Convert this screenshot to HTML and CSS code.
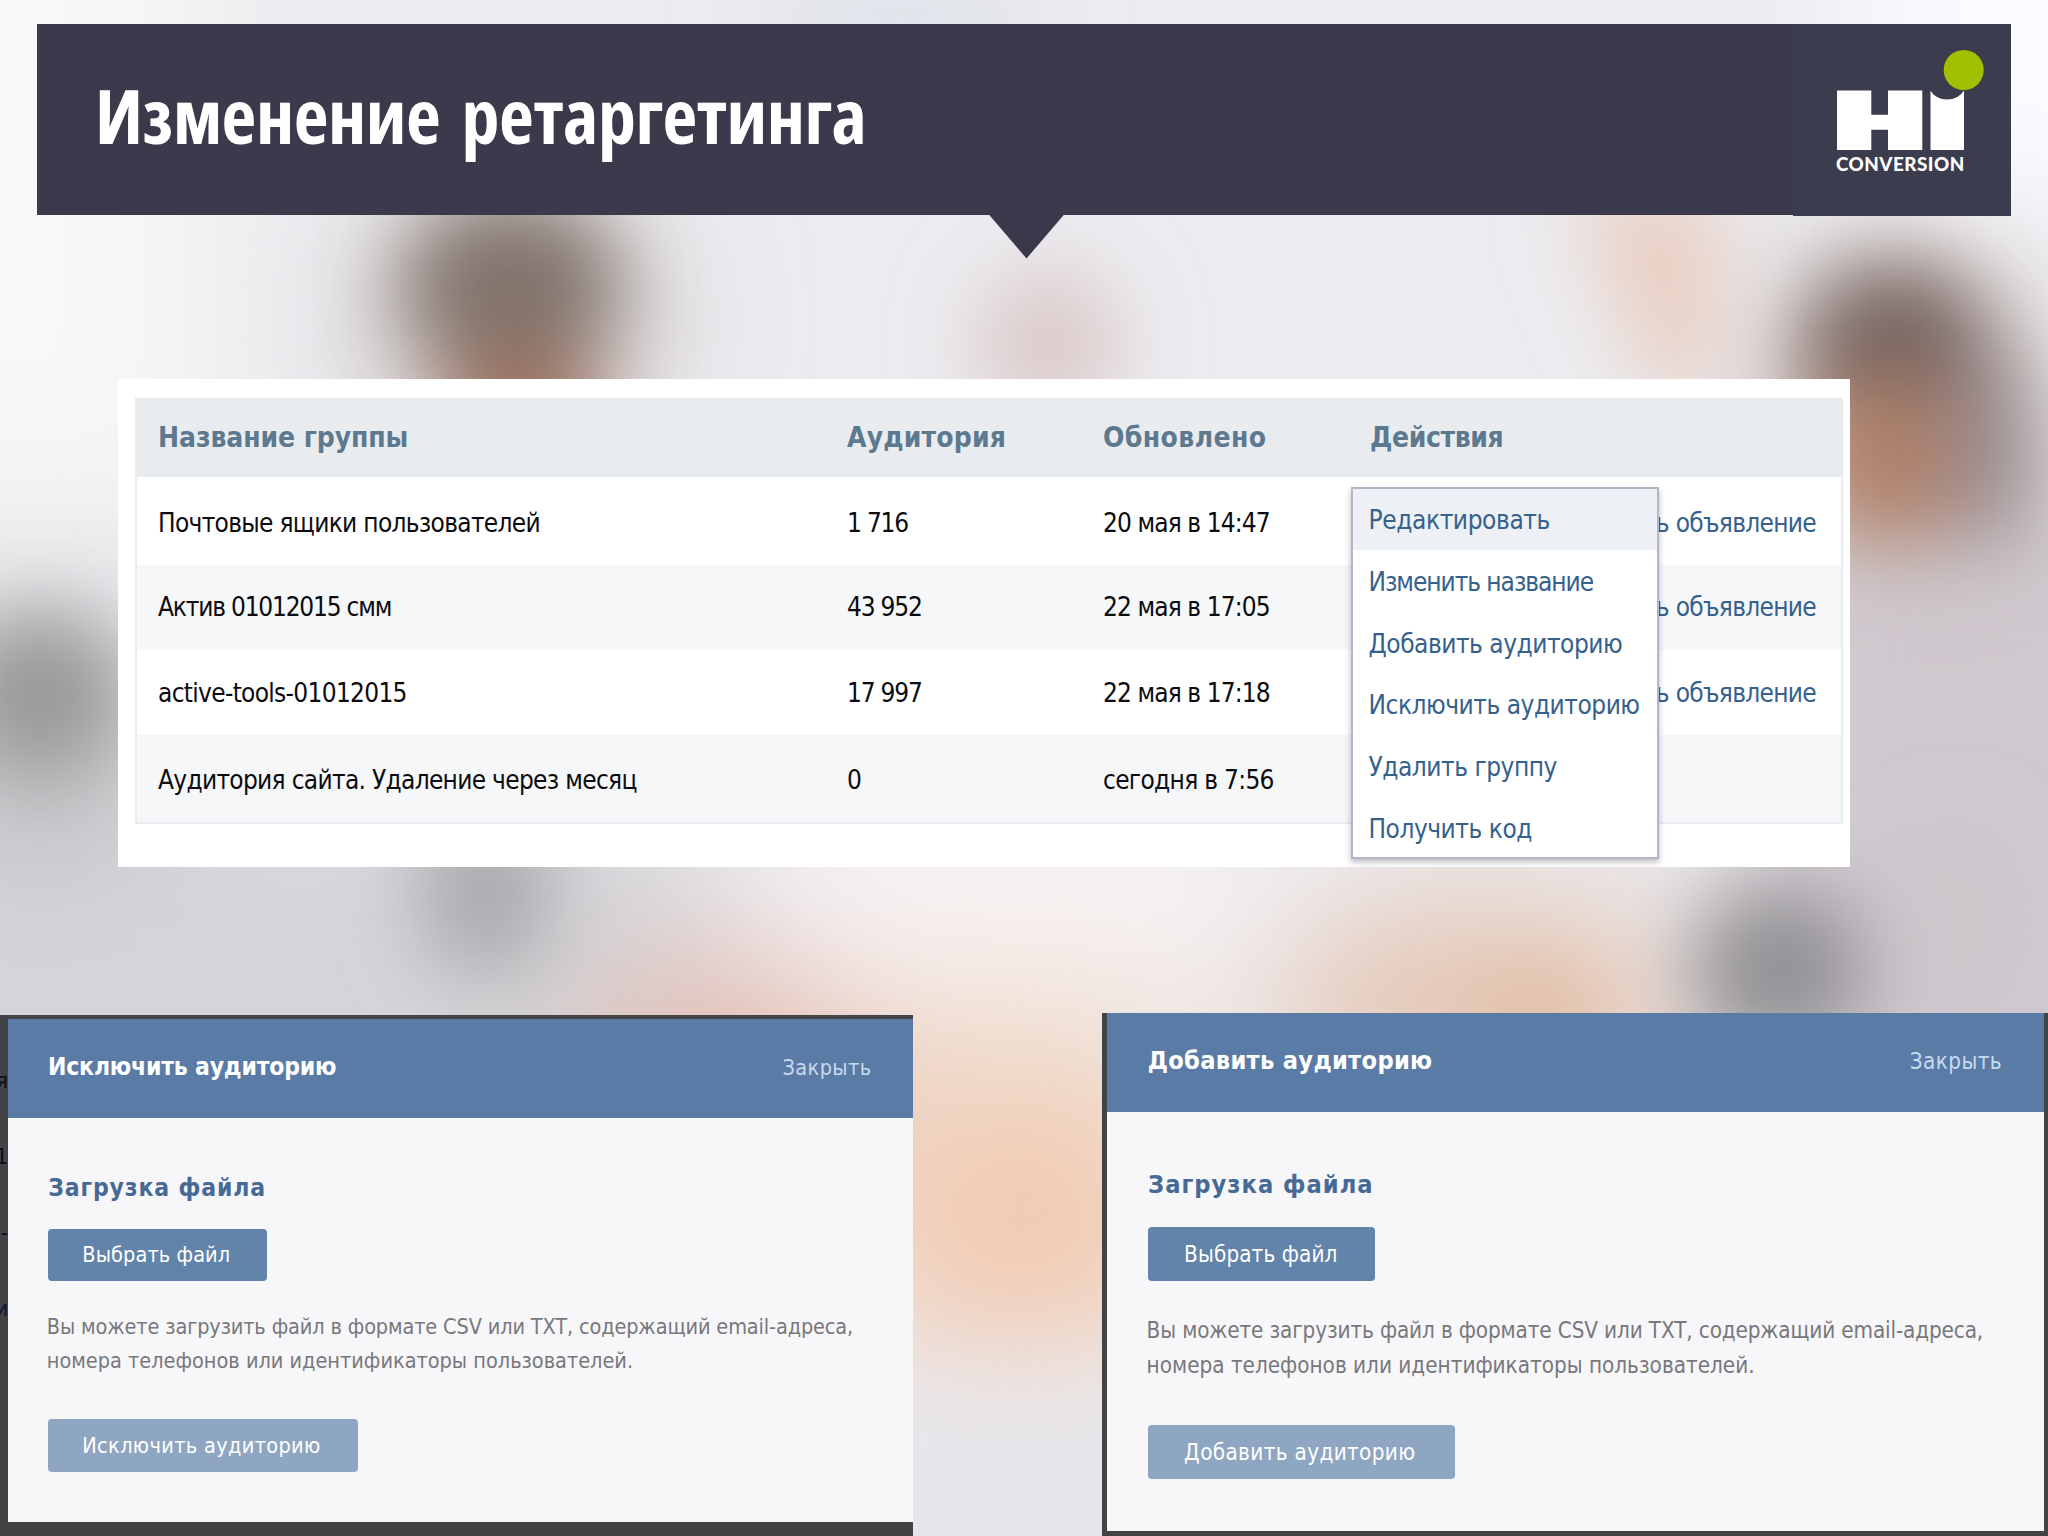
FILE: index.html
```html
<!DOCTYPE html>
<html lang="ru">
<head>
<meta charset="utf-8">
<title>Изменение ретаргетинга</title>
<link rel="stylesheet" href="styles.css">
</head>
<body>
<!-- Out-of-focus office photo behind the slide -->
<svg class="backdrop" viewBox="0 0 2048 1536" preserveAspectRatio="none" aria-hidden="true">
  <defs>
    <filter id="soft" x="-100%" y="-100%" width="300%" height="300%"><feGaussianBlur stdDeviation="40"/></filter>
    <filter id="wide" x="-100%" y="-100%" width="300%" height="300%"><feGaussianBlur stdDeviation="70"/></filter>
  </defs>
  <rect width="2048" height="1536" fill="#ececf0"/>
  <g filter="url(#wide)">
    <rect x="-200" y="-200" width="400" height="700" fill="#f8f8f8"/>
    <rect x="-200" y="780" width="900" height="500" fill="#d4d5d9"/>
    <rect x="1750" y="480" width="500" height="700" fill="#cfc8ce"/>
    <rect x="1850" y="-200" width="400" height="420" fill="#fafbff"/>
    <ellipse cx="510" cy="320" rx="150" ry="120" fill="#c8c0be"/>
    <ellipse cx="1900" cy="390" rx="130" ry="150" fill="#c3b3ae"/>
    <ellipse cx="40" cy="740" rx="130" ry="130" fill="#c2c2c5"/>
    <ellipse cx="1020" cy="900" rx="260" ry="100" fill="#f8f3f4"/>
    <ellipse cx="720" cy="1060" rx="150" ry="110" fill="#e3bdb2"/>
    <ellipse cx="1480" cy="1010" rx="220" ry="110" fill="#e4c6b4"/>
    <rect x="870" y="1110" width="300" height="230" fill="#f2c9ae"/>
    <rect x="860" y="980" width="300" height="120" fill="#efdccb"/>
    <rect x="800" y="1440" width="420" height="240" fill="#e2e4ea"/>
  </g>
  <g filter="url(#soft)">
    <ellipse cx="900" cy="15" rx="150" ry="35" fill="#dbe0e7"/>
    <ellipse cx="510" cy="285" rx="108" ry="88" fill="#81736c"/>
    <ellipse cx="520" cy="400" rx="85" ry="50" fill="#9d725e"/>
    <ellipse cx="1048" cy="345" rx="74" ry="80" fill="#dccbca"/>
    <path d="M1570 190h150v160q-20 60-70 40z" fill="#e9cfc2"/>
    <ellipse cx="1895" cy="350" rx="92" ry="84" fill="#75645e"/>
    <ellipse cx="1890" cy="462" rx="80" ry="80" fill="#b18269"/>
    <ellipse cx="1990" cy="450" rx="40" ry="100" fill="#948a8d"/>
    <ellipse cx="40" cy="695" rx="82" ry="80" fill="#979698"/>
    <ellipse cx="485" cy="890" rx="68" ry="90" fill="#aaaaae"/>
    <ellipse cx="1780" cy="970" rx="88" ry="85" fill="#939194"/>
    <ellipse cx="1535" cy="1030" rx="55" ry="60" fill="#e2bfa5"/>
    <ellipse cx="1955" cy="920" rx="40" ry="90" fill="#cdc6cb"/>
  </g>
</svg>

<div class="slide">
  <header class="banner">
    <h1 class="banner-title">Изменение ретаргетинга</h1>
    <div class="brand">
      <svg class="brand-mark" viewBox="0 0 147 100" width="147" height="100" aria-hidden="true">
        <path fill="#fff" d="M0 40.500h34.300v24.300h16.700v-24.300h34.300v59.500h-34.300v-20.300h-16.700v20.300h-34.300z"/>
        <path fill="#fff" d="M93.500 40.800Q99 49.500 110 49.500Q121.500 49.500 127 40.500V100H93.500z"/>
        <circle fill="#a2c000" cx="126.700" cy="20" r="20"/>
      </svg>
      <div class="brand-name">CONVERSION</div>
    </div>
  </header>

  <section class="panel">
    <div class="table">
      <div class="row row-head">
        <div>Название группы</div><div class="ls-b">Аудитория</div><div class="ls-c">Обновлено</div><div class="ls-d">Действия</div>
      </div>
      <div class="row row-1">
        <div>Почтовые ящики пользователей</div><div class="num">1 716</div><div class="date">20 мая в 14:47</div><div class="ad"><a>ь объявление</a></div>
      </div>
      <div class="row row-2 alt">
        <div class="num">Актив 01012015 смм</div><div class="num">43 952</div><div class="date">22 мая в 17:05</div><div class="ad"><a>ь объявление</a></div>
      </div>
      <div class="row row-3">
        <div>active-tools-01012015</div><div class="num">17 997</div><div class="date">22 мая в 17:18</div><div class="ad"><a>ь объявление</a></div>
      </div>
      <div class="row row-4 alt">
        <div>Аудитория сайта. Удаление через месяц</div><div>0</div><div>сегодня в 7:56</div><div></div>
      </div>
    </div>
    <ul class="menu">
      <li class="active">Редактировать</li>
      <li class="tight">Изменить название</li>
      <li>Добавить аудиторию</li>
      <li>Исключить аудиторию</li>
      <li>Удалить группу</li>
      <li>Получить код</li>
    </ul>
  </section>

  <div class="dialogs">
    <section class="dialog dialog-exclude">
      <div class="behind" aria-hidden="true"><span>я</span><span>1</span><span>s-</span><span class="link">и</span></div>
      <div class="dialog-head"><h2>Исключить аудиторию</h2><a>Закрыть</a></div>
      <div class="dialog-body">
        <h3>Загрузка файла</h3>
        <button class="btn">Выбрать файл</button>
        <p>Вы можете загрузить файл в формате CSV или TXT, содержащий email-адреса,<br><span class="loose">номера телефонов или идентификаторы пользователей.</span></p>
        <button class="btn btn-muted">Исключить аудиторию</button>
      </div>
    </section>
    <section class="dialog dialog-add">
      <div class="dialog-head"><h2>Добавить аудиторию</h2><a>Закрыть</a></div>
      <div class="dialog-body">
        <h3>Загрузка файла</h3>
        <button class="btn">Выбрать файл</button>
        <p>Вы можете загрузить файл в формате CSV или TXT, содержащий email-адреса,<br><span class="loose">номера телефонов или идентификаторы пользователей.</span></p>
        <button class="btn btn-muted">Добавить аудиторию</button>
      </div>
    </section>
  </div>
</div>
</body>
</html>
```
FILE: styles.css
```css
* { box-sizing: border-box; }

body {
  margin: 0;
  width: 2048px;
  height: 1536px;
  overflow: hidden;
  position: relative;
  font-family: "DejaVu Sans Condensed", "DejaVu Sans", sans-serif;
}

h1, h2, h3, p, ul { margin: 0; padding: 0; }

.backdrop {
  position: absolute;
  inset: 0;
  width: 2048px;
  height: 1536px;
}

.slide {
  position: relative;
  height: 1536px;
  padding-top: 23.5px;
  display: flex;
  flex-direction: column;
}

/* Banner */
.banner {
  position: relative;
  margin: 0 37.5px 0 37px;
  height: 191px;
  flex: none;
  display: flex;
  justify-content: space-between;
  background: #3a3a4c;
}

.banner::after {
  content: "";
  position: absolute;
  left: 951px;
  top: 190px;
  width: 77px;
  height: 45px;
  background: #3a394c;
  clip-path: polygon(0 0, 100% 0, 50% 100%);
}

.banner-title {
  padding-left: 58px;
  font: 700 76px/182px "Open Sans", "Noto Sans", sans-serif;
  font-stretch: 81%;
  letter-spacing: -.45px;
  word-spacing: 8px;
  color: #fff;
  white-space: nowrap;
}

.brand {
  width: 218px;
  height: 192px;
  padding: 26px 0 0 44.5px;
  background: #3b3c4e;
}

.brand-mark { display: block; }

.brand-name {
  margin: .8px 0 0 -1px;
  font: 900 18.800px/28px "Lato", sans-serif;
  letter-spacing: .5px;
  color: #fff;
}

/* Groups table */
.panel {
  position: relative;
  margin: 164px 0 0 118px;
  width: 1732px;
  height: 488px;
  flex: none;
  padding: 19px 7px 0 17px;
  background: #fff;
}

.table {
  border: 2px solid #e9ebee;
  border-top: 0;
}

.row {
  display: grid;
  grid-template-columns: 689px 256px 267px 1fr;
  align-items: center;
  padding-left: 21px;
  height: 86px;
  font-size: 26px;
  line-height: 34px;
  letter-spacing: -.7px;
  color: #0c0c10;
  white-space: nowrap;
}

.row-head {
  height: 79px;
  padding-top: 1px;
  background: #e9ecef;
  font-size: 28px;
  font-weight: bold;
  letter-spacing: -.1px;
  color: #5d798f;
}

.row-1 { height: 88px; padding-top: 5px; }
.row-2 { height: 85px; }
.row-3 { height: 85px; padding-top: 2px; }
.row-4 { height: 87px; padding-top: 4px; }
.alt { background: #f6f7f9; }
.num { letter-spacing: -1.200px; }
.date { letter-spacing: -.9px; }
.ls-b { letter-spacing: .15px; }
.ls-c { letter-spacing: .4px; }
.ls-d { letter-spacing: -.4px; }

.ad {
  text-align: right;
  padding-right: 25px;
  color: #36618c;
}

.menu {
  position: absolute;
  left: 1232.500px;
  top: 108px;
  width: 308px;
  height: 372px;
  list-style: none;
  background: #fff;
  border: 2px solid #b4b6c8;
  box-shadow: 0 3px 6px rgba(60, 60, 80, .35);
}

.menu li {
  height: 61.700px;
  padding: 1.700px 0 0 16px;
  font-size: 26px;
  line-height: 60px;
  letter-spacing: -.48px;
  color: #36618c;
  white-space: nowrap;
}

.menu .active { background: #edf0f5; letter-spacing: -.4px; }
.menu .tight { letter-spacing: -1.050px; }

/* Dialogs */
.dialogs {
  display: flex;
  justify-content: space-between;
  align-items: flex-start;
  margin-top: 146px;
}

.dialog {
  position: relative;
  background: #434244;
  white-space: nowrap;
}

.dialog-exclude {
  --fs: 21.500px;
  --line: 34px;
  width: 912.500px;
  height: 522px;
  margin-top: 2.500px;
  padding: 4px 0 0 8px;
}

.dialog-add {
  --fs: 22.300px;
  --line: 35px;
  width: 945.700px;
  height: 524px;
  padding: 0 4px 4px 4.500px;
}

.dialog-head {
  height: 98.500px;
  display: flex;
  justify-content: space-between;
  align-items: center;
  background: #5a7ba6;
  color: #fff;
}

.dialog-exclude .dialog-head { padding: 0 41px 3px 40px; }
.dialog-add .dialog-head { height: 99.500px; padding: 0 42px 3px 41px; }

h2 { font-size: 24.500px; line-height: 30px; letter-spacing: -.2px; }
.dialog-add h2 { font-size: 25.200px; letter-spacing: .28px; }

.dialog-head a {
  padding-top: 2px;
  font-size: var(--fs);
  letter-spacing: .4px;
  color: #c6daef;
}

.dialog-add .dialog-head a { padding-top: 0; }

.dialog-body {
  height: 404px;
  padding: 55px 0 0 40.300px;
  background: #f7f6f9;
}

.dialog-add .dialog-body { height: 419px; padding: 58.300px 0 0 41.300px; }

h3 {
  font-size: 24.500px;
  line-height: 30px;
  letter-spacing: .85px;
  color: #466a95;
}

.dialog-add h3 { font-size: 25.200px; letter-spacing: 1px; }

.btn {
  display: block;
  margin: 26px 0 0;
  height: 52.400px;
  padding: 0 0 0 34px;
  border: 0;
  border-radius: 4px;
  background: #6283aa;
  font-family: inherit;
  font-size: var(--fs);
  letter-spacing: .1px;
  text-align: left;
  color: #fff;
}

.dialog-exclude .btn { width: 218.700px; }
.dialog-exclude .btn-muted { width: 309.400px; }
.dialog-add .btn { margin-top: 27.200px; width: 226.700px; height: 53.700px; padding-left: 36px; }
.dialog-add .btn-muted { width: 306.400px; }

.dialog .btn-muted {
  background: #8fa6c2;
  letter-spacing: .35px;
}

.dialog-exclude .btn-muted { margin-top: 41px; }
.dialog-add .btn-muted { margin-top: 42.400px; }

.dialog p {
  margin: 29.600px 0 0 -1.500px;
  font-size: var(--fs);
  line-height: var(--line);
  letter-spacing: -.13px;
  color: #77787c;
}

.dialog-add p { margin-top: 31.500px; }
.loose { letter-spacing: 0; }

/* Page showing through at the dialog's left edge */
.behind {
  position: absolute;
  left: 0;
  top: 28px;
  width: 8px;
  height: 310px;
  overflow: hidden;
  display: flex;
  flex-direction: column;
  align-items: flex-end;
  font-size: 22px;
  line-height: 76px;
  color: #0d0d10;
}

.behind .link { color: #10163a; }
```
